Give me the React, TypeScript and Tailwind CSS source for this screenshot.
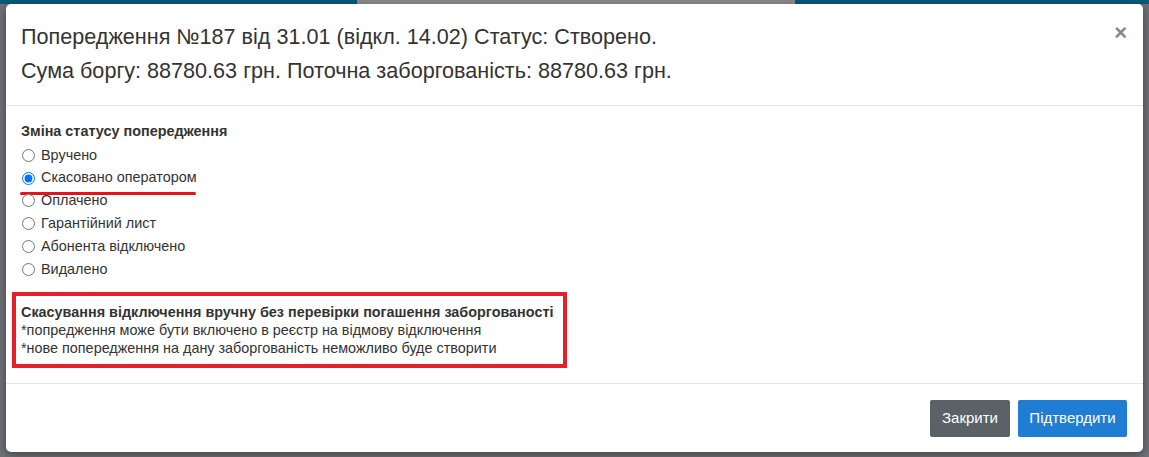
import React from "react";

const statuses = [
  "Вручено",
  "Скасовано оператором",
  "Оплачено",
  "Гарантійний лист",
  "Абонента відключено",
  "Видалено",
];

export default function App() {
  const [selected, setSelected] = React.useState(1);

  return (
    <div
      className="relative w-[1149px] h-[457px] overflow-hidden bg-[#6d7076]"
      style={{ fontFamily: '"Liberation Sans", Arial, sans-serif' }}
    >
      {/* dimmed page behind the modal */}
      <div className="absolute inset-0 flex flex-col">
        <div className="h-[4px] bg-[#0b5878] flex">
          <div className="ml-[357px] w-[438px] bg-[#8a8a8a]"></div>
        </div>
        <div className="flex-1"></div>
        <div className="h-[6px] bg-[#6f7278]"></div>
      </div>

      <div className="relative pt-[4px] px-[6px]">
        <div className="bg-white rounded-[5px] shadow-[0_3px_9px_rgba(0,0,0,0.4)]">
          {/* header */}
          <div className="flex items-start justify-between pl-[15px] pr-[16px] pt-[16px] pb-[17px] border-b border-[#e5e5e5] text-[#333]">
            <div className="text-[21.6px] leading-[34px]">
              <div>Попередження №187 від 31.01 (відкл. 14.02) Статус: Створено.</div>
              <div>Сума боргу: 88780.63 грн. Поточна заборгованість: 88780.63 грн.</div>
            </div>
            <button className="text-[22px] leading-none font-bold text-[#888] mt-[2px]">×</button>
          </div>

          {/* body */}
          <div className="px-[15px] pt-[15px] pb-[15px] text-[14.4px] text-[#333]">
            <div className="font-bold leading-[20px] mb-[3px]">Зміна статусу попередження</div>
            <div className="flex flex-col">
              {statuses.map((s, i) => (
                <label key={s} className="flex items-center h-[22.8px] cursor-pointer">
                  <span className="relative inline-flex items-center">
                    <input
                      type="radio"
                      name="status"
                      checked={selected === i}
                      onChange={() => setSelected(i)}
                      className="w-[13px] h-[13px] ml-[1px] mr-[6px] accent-[#0075ff]"
                    />
                    <span>{s}</span>
                    {i === 1 && (
                      <span className="absolute left-[-1px] right-[1px] bottom-[-6px] h-[3px] rounded-full bg-[#e4131d]"></span>
                    )}
                  </span>
                </label>
              ))}
            </div>
            <div className="mt-[11px] ml-[-9px] w-[555px] border-[4px] border-[#e4202b] pl-[5px] pt-[7px] pb-[7px] leading-[18px]">
              <div className="font-bold">Скасування відключення вручну без перевірки погашення заборгованості</div>
              <div>*попредження може бути включено в реєстр на відмову відключення</div>
              <div>*нове попередження на дану заборгованість неможливо буде створити</div>
            </div>
          </div>

          {/* footer */}
          <div className="flex justify-end gap-[8px] border-t border-[#e5e5e5] pt-[16px] pb-[15px] pr-[16px]">
            <button className="h-[37px] w-[80px] bg-[#5a6268] text-white text-[15px] rounded-[2px]">Закрити</button>
            <button className="h-[37px] w-[109px] bg-[#1f7dd3] text-white text-[15px] rounded-[2px]">Підтвердити</button>
          </div>
        </div>
      </div>
    </div>
  );
}
